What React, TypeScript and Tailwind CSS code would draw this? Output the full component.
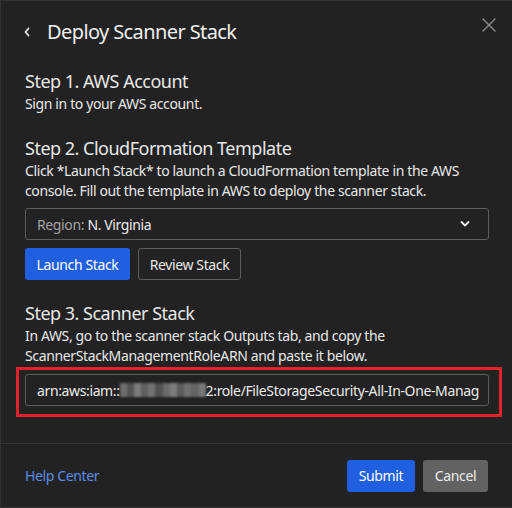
import React from "react";

const font = { fontFamily: '"Noto Sans", "Open Sans", sans-serif' };

function ChevronLeft() {
  return (
    <svg width="8" height="10" viewBox="0 0 8 10" fill="none">
      <path d="M5.5 1.5 L2.5 5 L5.5 8.5" stroke="#e6e6e6" strokeWidth="1.8" strokeLinecap="round" strokeLinejoin="round" />
    </svg>
  );
}

function CloseIcon() {
  return (
    <svg width="16" height="16" viewBox="0 0 16 16" fill="none">
      <path d="M1.5 1.5 L14.5 14.5 M14.5 1.5 L1.5 14.5" stroke="#8c8c8c" strokeWidth="1.4" />
    </svg>
  );
}

function ChevronDown() {
  return (
    <svg width="10" height="8" viewBox="0 0 10 8" fill="none">
      <path d="M1.5 2 L5 5.5 L8.5 2" stroke="#f0f0f0" strokeWidth="1.8" strokeLinecap="round" strokeLinejoin="round" />
    </svg>
  );
}

// pixelated placeholder standing in for a hidden account number
function Redacted() {
  const cells = ["#7a7a7a", "#5e5e5e", "#8a8a8a", "#6a6a6a", "#808080", "#5a5a5a", "#777777", "#8c8c8c", "#646464", "#7e7e7e", "#6f6f6f", "#858585"];
  return (
    <span className="inline-flex h-[14px] w-[86px] items-stretch blur-[1px] opacity-85">
      {cells.map((c, i) => (
        <span key={i} className="flex-1" style={{ backgroundColor: c }} />
      ))}
    </span>
  );
}

export default function App() {
  return (
    <div
      className="w-[512px] h-[508px] bg-[#222222] border-t border-l border-b border-[#333333] flex flex-col text-[#e8e8e8]"
      style={font}
    >
      {/* header */}
      <div className="h-[61px] flex items-start justify-between pl-[22px] pr-6">
        <div className="flex items-center gap-[16px] h-[61px] pt-[1px]">
          <ChevronLeft />
          <span className="text-[20px] leading-[28px] tracking-[-0.6px] text-[#f0f0f0]">Deploy Scanner Stack</span>
        </div>
        <button className="mt-[16px] -mr-[9px]">
          <CloseIcon />
        </button>
      </div>

      {/* body */}
      <div className="flex-1 px-6 pt-[6px] tracking-[-0.37px]">
        <h2 className="text-[18px] leading-[26px] tracking-[-0.5px]">Step 1. AWS Account</h2>
        <p className="text-[14px] leading-[20px]">Sign in to your AWS account.</p>

        <h2 className="text-[18px] leading-[26px] tracking-[-0.5px] mt-[21px]">Step 2. CloudFormation Template</h2>
        <p className="text-[14px] leading-[20px]">
          Click *Launch Stack* to launch a CloudFormation template in the AWS console. Fill out the template in AWS to deploy the scanner stack.
        </p>

        <div className="mt-[7px] h-[32px] w-[464px] border border-[#5c5c5c] rounded-[3px] flex items-center justify-between pl-[11px] pr-[18px] text-[14px]">
          <span>
            <span className="text-[#a3a3a3]">Region: </span>
            <span className="text-[#ececec]">N. Virginia</span>
          </span>
          <ChevronDown />
        </div>

        <div className="mt-[8px] flex gap-[8px]">
          <button className="h-[32px] w-[105px] bg-[#1f5fe0] rounded-[3px] text-[14px] text-white">Launch Stack</button>
          <button className="h-[32px] w-[103px] border border-[#5c5c5c] rounded-[3px] text-[14px] text-[#e8e8e8]">Review Stack</button>
        </div>

        <h2 className="text-[18px] leading-[26px] tracking-[-0.5px] mt-[20px]">Step 3. Scanner Stack</h2>
        <p className="text-[14px] leading-[20px]">
          In AWS, go to the scanner stack Outputs tab, and copy the ScannerStackManagementRoleARN and paste it below.
        </p>

        <div className="relative mt-[8px] w-[464px]">
          <div className="h-[32px] border border-[#5c5c5c] rounded-[3px] flex items-center pl-[11px] text-[14px] whitespace-nowrap overflow-hidden text-[#ececec]">
            <span>arn:aws:iam::</span>
            <Redacted />
            <span>2:role/FileStorageSecurity-All-In-One-Manag</span>
          </div>
          <div className="absolute -left-[9px] -top-[7px] -right-[13px] -bottom-[11px] border-[3px] border-[#e3212b] pointer-events-none"></div>
        </div>
      </div>

      {/* footer */}
      <div className="h-[64px] border-t border-[#333333] flex items-center justify-between pl-6 pr-6 tracking-[-0.37px]">
        <a className="text-[14px] text-[#5b8de6]">Help Center</a>
        <div className="flex gap-[8px]">
          <button className="h-[32px] w-[68px] bg-[#1f5fe0] rounded-[3px] text-[14px] text-white">Submit</button>
          <button className="h-[32px] w-[65px] bg-[#626262] rounded-[3px] text-[14px] text-[#ececec]">Cancel</button>
        </div>
      </div>
    </div>
  );
}
